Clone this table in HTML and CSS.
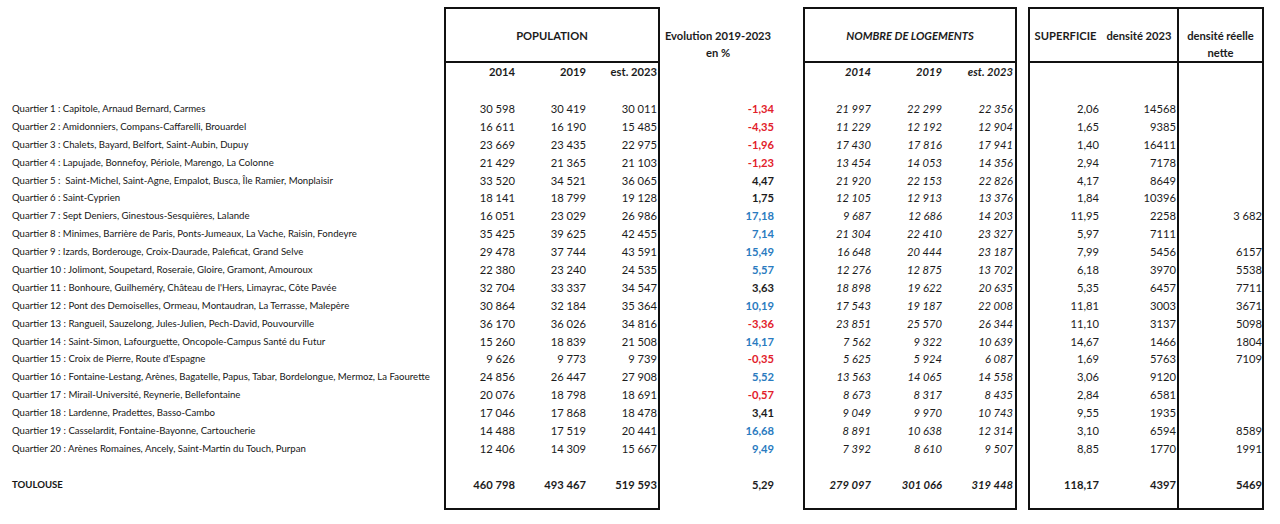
FILE: index.html
```html
<!DOCTYPE html>
<html lang="fr">
<head>
<meta charset="utf-8">
<title>Toulouse – quartiers</title>
<link rel="stylesheet" href="styles.css">
</head>
<body>
<div class="sheet">

  <div class="panel labels">
    <div class="hd"></div>
    <div class="sub"></div>
    <div class="sp"></div>
    <div class="r">Quartier 1 : Capitole, Arnaud Bernard, Carmes</div>
    <div class="r">Quartier 2 : Amidonniers, Compans-Caffarelli, Brouardel</div>
    <div class="r">Quartier 3 : Chalets, Bayard, Belfort, Saint-Aubin, Dupuy</div>
    <div class="r">Quartier 4 : Lapujade, Bonnefoy, Périole, Marengo, La Colonne</div>
    <div class="r">Quartier 5 : &nbsp;Saint-Michel, Saint-Agne, Empalot, Busca, Île Ramier, Monplaisir</div>
    <div class="r">Quartier 6 : Saint-Cyprien</div>
    <div class="r">Quartier 7 : Sept Deniers, Ginestous-Sesquières, Lalande</div>
    <div class="r">Quartier 8 : Minimes, Barrière de Paris, Ponts-Jumeaux, La Vache, Raisin, Fondeyre</div>
    <div class="r">Quartier 9 : Izards, Borderouge, Croix-Daurade, Paleficat, Grand Selve</div>
    <div class="r">Quartier 10 : Jolimont, Soupetard, Roseraie, Gloire, Gramont, Amouroux</div>
    <div class="r">Quartier 11 : Bonhoure, Guilheméry, Château de l'Hers, Limayrac, Côte Pavée</div>
    <div class="r">Quartier 12 : Pont des Demoiselles, Ormeau, Montaudran, La Terrasse, Malepère</div>
    <div class="r">Quartier 13 : Rangueil, Sauzelong, Jules-Julien, Pech-David, Pouvourville</div>
    <div class="r">Quartier 14 : Saint-Simon, Lafourguette, Oncopole-Campus Santé du Futur</div>
    <div class="r">Quartier 15 : Croix de Pierre, Route d'Espagne</div>
    <div class="r">Quartier 16 : Fontaine-Lestang, Arènes, Bagatelle, Papus, Tabar, Bordelongue, Mermoz, La Faourette</div>
    <div class="r">Quartier 17 : Mirail-Université, Reynerie, Bellefontaine</div>
    <div class="r">Quartier 18 : Lardenne, Pradettes, Basso-Cambo</div>
    <div class="r">Quartier 19 : Casselardit, Fontaine-Bayonne, Cartoucherie</div>
    <div class="r">Quartier 20 : Arènes Romaines, Ancely, Saint-Martin du Touch, Purpan</div>
    <div class="sp"></div>
    <div class="r tot">TOULOUSE</div>
  </div>

  <div class="panel box pop">
    <div class="hd"><span class="ttl">POPULATION</span></div>
    <div class="r sub"><span>2014</span><span>2019</span><span>est. 2023</span></div>
    <div class="sp"></div>
    <div class="r"><span>30 598</span><span>30 419</span><span>30 011</span></div>
    <div class="r"><span>16 611</span><span>16 190</span><span>15 485</span></div>
    <div class="r"><span>23 669</span><span>23 435</span><span>22 975</span></div>
    <div class="r"><span>21 429</span><span>21 365</span><span>21 103</span></div>
    <div class="r"><span>33 520</span><span>34 521</span><span>36 065</span></div>
    <div class="r"><span>18 141</span><span>18 799</span><span>19 128</span></div>
    <div class="r"><span>16 051</span><span>23 029</span><span>26 986</span></div>
    <div class="r"><span>35 425</span><span>39 625</span><span>42 455</span></div>
    <div class="r"><span>29 478</span><span>37 744</span><span>43 591</span></div>
    <div class="r"><span>22 380</span><span>23 240</span><span>24 535</span></div>
    <div class="r"><span>32 704</span><span>33 337</span><span>34 547</span></div>
    <div class="r"><span>30 864</span><span>32 184</span><span>35 364</span></div>
    <div class="r"><span>36 170</span><span>36 026</span><span>34 816</span></div>
    <div class="r"><span>15 260</span><span>18 839</span><span>21 508</span></div>
    <div class="r"><span>9 626</span><span>9 773</span><span>9 739</span></div>
    <div class="r"><span>24 856</span><span>26 447</span><span>27 908</span></div>
    <div class="r"><span>20 076</span><span>18 798</span><span>18 691</span></div>
    <div class="r"><span>17 046</span><span>17 868</span><span>18 478</span></div>
    <div class="r"><span>14 488</span><span>17 519</span><span>20 441</span></div>
    <div class="r"><span>12 406</span><span>14 309</span><span>15 667</span></div>
    <div class="sp"></div>
    <div class="r tot"><span>460 798</span><span>493 467</span><span>519 593</span></div>
  </div>

  <div class="panel evol">
    <div class="hd two"><span class="ttl">Evolution 2019-2023</span><span class="ttl">en %</span></div>
    <div class="sub"></div>
    <div class="sp"></div>
    <div class="r neg">-1,34</div>
    <div class="r neg">-4,35</div>
    <div class="r neg">-1,96</div>
    <div class="r neg">-1,23</div>
    <div class="r">4,47</div>
    <div class="r">1,75</div>
    <div class="r pos">17,18</div>
    <div class="r pos">7,14</div>
    <div class="r pos">15,49</div>
    <div class="r pos">5,57</div>
    <div class="r">3,63</div>
    <div class="r pos">10,19</div>
    <div class="r neg">-3,36</div>
    <div class="r pos">14,17</div>
    <div class="r neg">-0,35</div>
    <div class="r pos">5,52</div>
    <div class="r neg">-0,57</div>
    <div class="r">3,41</div>
    <div class="r pos">16,68</div>
    <div class="r pos">9,49</div>
    <div class="sp"></div>
    <div class="r tot">5,29</div>
  </div>

  <div class="panel box log">
    <div class="hd"><span class="ttl">NOMBRE DE LOGEMENTS</span></div>
    <div class="r sub"><span>2014</span><span>2019</span><span>est. 2023</span></div>
    <div class="sp"></div>
    <div class="r"><span>21 997</span><span>22 299</span><span>22 356</span></div>
    <div class="r"><span>11 229</span><span>12 192</span><span>12 904</span></div>
    <div class="r"><span>17 430</span><span>17 816</span><span>17 941</span></div>
    <div class="r"><span>13 454</span><span>14 053</span><span>14 356</span></div>
    <div class="r"><span>21 920</span><span>22 153</span><span>22 826</span></div>
    <div class="r"><span>12 105</span><span>12 913</span><span>13 376</span></div>
    <div class="r"><span>9 687</span><span>12 686</span><span>14 203</span></div>
    <div class="r"><span>21 304</span><span>22 410</span><span>23 327</span></div>
    <div class="r"><span>16 648</span><span>20 444</span><span>23 187</span></div>
    <div class="r"><span>12 276</span><span>12 875</span><span>13 702</span></div>
    <div class="r"><span>18 898</span><span>19 622</span><span>20 635</span></div>
    <div class="r"><span>17 543</span><span>19 187</span><span>22 008</span></div>
    <div class="r"><span>23 851</span><span>25 570</span><span>26 344</span></div>
    <div class="r"><span>7 562</span><span>9 322</span><span>10 639</span></div>
    <div class="r"><span>5 625</span><span>5 924</span><span>6 087</span></div>
    <div class="r"><span>13 563</span><span>14 065</span><span>14 558</span></div>
    <div class="r"><span>8 673</span><span>8 317</span><span>8 435</span></div>
    <div class="r"><span>9 049</span><span>9 970</span><span>10 743</span></div>
    <div class="r"><span>8 891</span><span>10 638</span><span>12 314</span></div>
    <div class="r"><span>7 392</span><span>8 610</span><span>9 507</span></div>
    <div class="sp"></div>
    <div class="r tot"><span>279 097</span><span>301 066</span><span>319 448</span></div>
  </div>

  <div class="panel box area">
    <div class="area-l">
      <div class="hd split"><span class="ttl">SUPERFICIE</span><span class="ttl">densité 2023</span></div>
      <div class="sub"></div>
      <div class="sp"></div>
      <div class="r"><span>2,06</span><span>14568</span></div>
      <div class="r"><span>1,65</span><span>9385</span></div>
      <div class="r"><span>1,40</span><span>16411</span></div>
      <div class="r"><span>2,94</span><span>7178</span></div>
      <div class="r"><span>4,17</span><span>8649</span></div>
      <div class="r"><span>1,84</span><span>10396</span></div>
      <div class="r"><span>11,95</span><span>2258</span></div>
      <div class="r"><span>5,97</span><span>7111</span></div>
      <div class="r"><span>7,99</span><span>5456</span></div>
      <div class="r"><span>6,18</span><span>3970</span></div>
      <div class="r"><span>5,35</span><span>6457</span></div>
      <div class="r"><span>11,81</span><span>3003</span></div>
      <div class="r"><span>11,10</span><span>3137</span></div>
      <div class="r"><span>14,67</span><span>1466</span></div>
      <div class="r"><span>1,69</span><span>5763</span></div>
      <div class="r"><span>3,06</span><span>9120</span></div>
      <div class="r"><span>2,84</span><span>6581</span></div>
      <div class="r"><span>9,55</span><span>1935</span></div>
      <div class="r"><span>3,10</span><span>6594</span></div>
      <div class="r"><span>8,85</span><span>1770</span></div>
      <div class="sp"></div>
      <div class="r tot"><span>118,17</span><span>4397</span></div>
    </div>
    <div class="area-r">
      <div class="hd two"><span class="ttl">densité réelle</span><span class="ttl">nette</span></div>
      <div class="sub"></div>
      <div class="sp"></div>
      <div class="r"></div>
      <div class="r"></div>
      <div class="r"></div>
      <div class="r"></div>
      <div class="r"></div>
      <div class="r"></div>
      <div class="r">3 682</div>
      <div class="r"></div>
      <div class="r">6157</div>
      <div class="r">5538</div>
      <div class="r">7711</div>
      <div class="r">3671</div>
      <div class="r">5098</div>
      <div class="r">1804</div>
      <div class="r">7109</div>
      <div class="r"></div>
      <div class="r"></div>
      <div class="r"></div>
      <div class="r">8589</div>
      <div class="r">1991</div>
      <div class="sp"></div>
      <div class="r tot">5469</div>
    </div>
  </div>

</div>
</body>
</html>
```
FILE: styles.css
```css
* { box-sizing: border-box; }

html, body {
  margin: 0;
  padding: 0;
  background: #ffffff;
}

body {
  font-family: Lato, "Open Sans", "Liberation Sans", sans-serif;
  color: #1c1c1c;
  font-size: 11.2px;
}

.sheet {
  display: flex;
  align-items: flex-start;
  padding-top: 7px;
}

.panel {
  display: flex;
  flex-direction: column;
  border: 2px solid transparent;
  height: 503px;
}

.box {
  border-color: #111111;
}

.hd {
  height: 54px;
  border-bottom: 2px solid transparent;
  display: flex;
  align-items: center;
  justify-content: center;
  font-weight: 700;
}

.box .hd { border-bottom-color: #111111; }

.hd.two {
  flex-direction: column;
  justify-content: flex-start;
  padding-top: 18px;
  line-height: 17px;
}

.sub { height: 18px; }
.sp { height: 18px; }

.r {
  height: 17.9px;
  line-height: 17.9px;
  padding-top: 1px;
  white-space: nowrap;
}

.r > span {
  text-align: right;
}

.tot { font-weight: 700; }

/* labels */
.labels {
  width: 444px;
  padding-left: 10px;
  font-size: 9.6px;
}
.labels .r { color: #161616; }

/* population */
.pop { width: 216px; }
.pop .r {
  display: grid;
  grid-template-columns: 71px 71px 70px;
}
.pop .r > span:nth-child(1),
.pop .r > span:nth-child(2) { padding-right: 2px; }
.pop .r > span:nth-child(3) { padding-right: 1px; }
.r.sub {
  font-weight: 700;
  height: 18px;
  line-height: 18px;
  padding-top: 0;
}

/* evolution */
.evol {
  width: 116px;
  text-align: right;
}
.evol .r { font-weight: 700; }
.evol .neg { color: #e2202b; }
.evol .pos { color: #2a7bc0; }

/* logements */
.log {
  width: 214px;
  margin-left: 27px;
  font-style: italic;
}
.log .r {
  display: grid;
  grid-template-columns: 68px 71px 71px;
}
.log .r > span { padding-right: 2px; }

/* superficie / densités */
.area {
  width: 236px;
  margin-left: 11px;
  flex-direction: row;
}
.area-l, .area-r {
  display: flex;
  flex-direction: column;
}
.area-l {
  width: 149px;
  border-right: 2px solid #111111;
}
.area-r {
  width: 83px;
  text-align: right;
}
.area .hd { border-bottom-color: #111111; }
.hd.split {
  display: grid;
  grid-template-columns: 71px 76px;
  align-items: center;
  text-align: center;
}
.area-l .r {
  display: grid;
  grid-template-columns: 71px 76px;
}
.area-l .r > span:nth-child(1) { padding-right: 2px; }
.area-l .r > span:nth-child(2) { padding-right: 1px; }
```
